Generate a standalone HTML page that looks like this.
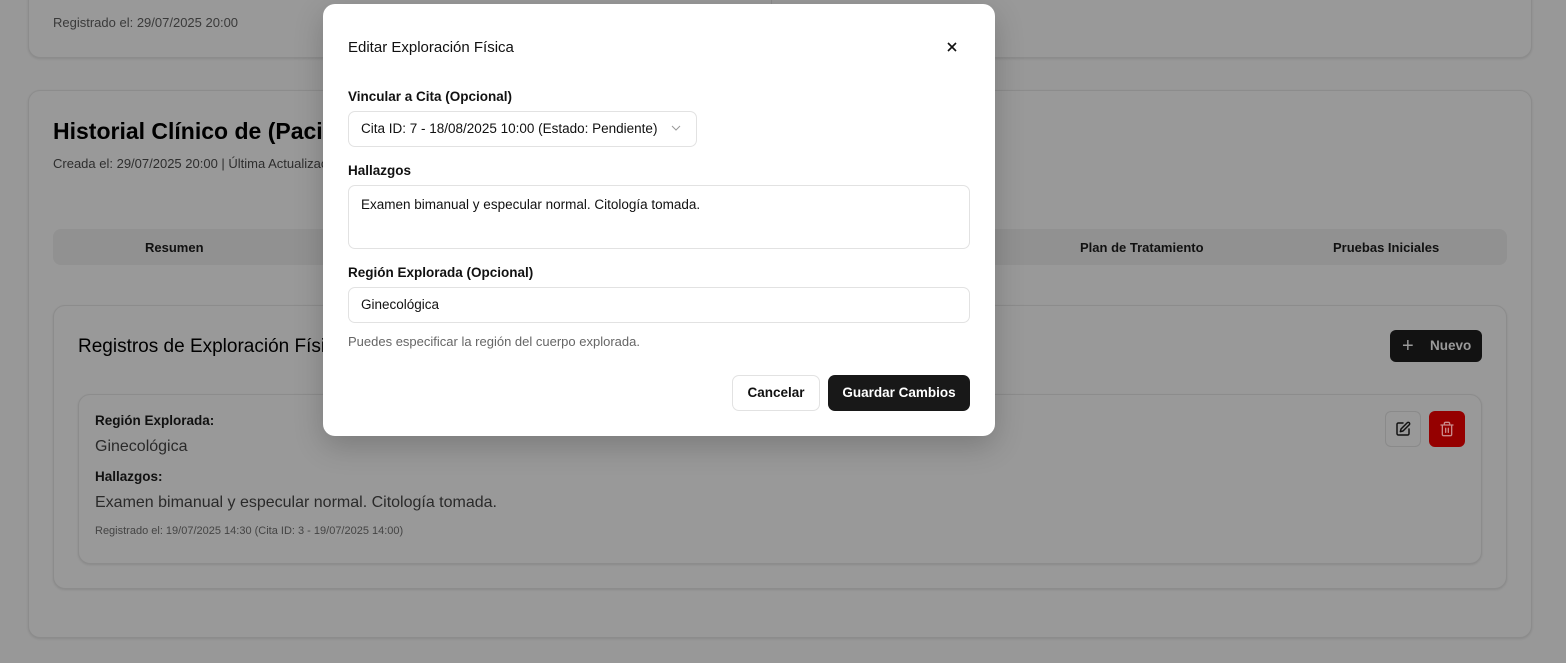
<!DOCTYPE html>
<html><head><meta charset="utf-8"><style>
*{box-sizing:border-box;margin:0;padding:0}
body{width:1566px;height:663px;overflow:hidden;background:#989898;font-family:"Liberation Sans",sans-serif;color:#111;position:relative}
.a{position:absolute;white-space:nowrap}
.card{position:absolute;border:1px solid #8c8c8c;border-radius:12px;background:#999;box-shadow:0 1px 2px rgba(0,0,0,.1)}
.modal{position:absolute;left:323px;top:4px;width:672px;height:432px;background:#fff;border-radius:12px;box-shadow:0 10px 30px rgba(0,0,0,.2)}
.lbl{font-size:13.5px;font-weight:bold;color:#111}
.inp{position:absolute;border:1px solid #e2e2e2;border-radius:7px;background:#fff;font-size:13.5px;color:#111;padding-left:12px}
</style></head><body>
<div class="card" style="left:28px;top:-20px;width:1504px;height:78px"></div>
<div class="a" style="left:53px;top:15px;font-size:13px;color:#3a3a3a">Registrado el: 29/07/2025 20:00</div>
<div class="a" style="left:771px;top:0;width:1px;height:40px;background:#8c8c8c"></div>

<div class="card" style="left:28px;top:90px;width:1504px;height:548px"></div>
<div class="a" style="left:53px;top:118px;font-size:23px;font-weight:bold;color:#000">Historial Clínico de (Paciente)</div>
<div class="a" style="left:53px;top:156px;font-size:13px;color:#2e2e2e">Creada el: 29/07/2025 20:00 | Última Actualización</div>
<div class="a" style="left:53px;top:229px;width:1454px;height:36px;background:#919191;border-radius:8px"></div>
<div class="a" style="left:145px;top:240px;font-size:13px;font-weight:bold">Resumen</div>
<div class="a" style="left:1080px;top:240px;font-size:13px;font-weight:bold">Plan de Tratamiento</div>
<div class="a" style="left:1333px;top:240px;font-size:13px;font-weight:bold">Pruebas Iniciales</div>

<div class="card" style="left:53px;top:305px;width:1454px;height:284px"></div>
<div class="a" style="left:78px;top:336px;font-size:19px;color:#000">Registros de Exploración Física</div>
<div class="a" style="left:1390px;top:330px;width:92px;height:32px;background:#121212;border-radius:6px;color:#9a9a9a;font-size:13.5px;font-weight:bold;padding:8px 0 0 40px">Nuevo</div>
<div class="a" style="left:1402px;top:336px;color:#9a9a9a;font-size:20px;line-height:20px">+</div>

<div class="card" style="left:78px;top:394px;width:1404px;height:170px"></div>
<div class="a" style="left:95px;top:413px;font-size:13.5px;font-weight:bold">Región Explorada:</div>
<div class="a" style="left:95px;top:438px;font-size:16px;color:#2a2a2a">Ginecológica</div>
<div class="a" style="left:95px;top:469px;font-size:13.5px;font-weight:bold">Hallazgos:</div>
<div class="a" style="left:95px;top:494px;font-size:16px;color:#2a2a2a">Examen bimanual y especular normal. Citología tomada.</div>
<div class="a" style="left:95px;top:525px;font-size:11px;color:#444">Registrado el: 19/07/2025 14:30 (Cita ID: 3 - 19/07/2025 14:00)</div>
<div class="a" style="left:1385px;top:411px;width:36px;height:36px;border:1px solid #8a8a8a;border-radius:6px"></div>
<svg class="a" style="left:1395px;top:421px" width="16" height="16" viewBox="0 0 24 24" fill="none" stroke="#111" stroke-width="2.2" stroke-linecap="round" stroke-linejoin="round"><path d="M12 3H5a2 2 0 0 0-2 2v14a2 2 0 0 0 2 2h14a2 2 0 0 0 2-2v-7"/><path d="M18.4 2.6a2.1 2.1 0 0 1 3 3L12 15l-4 1 1-4z"/></svg>
<div class="a" style="left:1429px;top:411px;width:36px;height:36px;background:#950000;border-radius:6px"></div>
<svg class="a" style="left:1439px;top:421px" width="16" height="16" viewBox="0 0 24 24" fill="none" stroke="#c98a8a" stroke-width="2" stroke-linecap="round"><path d="M3 6h18M19 6v14a2 2 0 0 1-2 2H7a2 2 0 0 1-2-2V6M8 6V4a2 2 0 0 1 2-2h4a2 2 0 0 1 2 2v2M10 11v6M14 11v6"/></svg>

<div class="modal">
<div class="a" style="left:25px;top:35px;font-size:15px;font-weight:normal;color:#111">Editar Exploración Física</div>
<svg class="a" style="left:623px;top:37px" width="12" height="12" viewBox="0 0 12 12" stroke="#111" stroke-width="1.6"><path d="M2 2L10 10M10 2L2 10"/></svg>
<div class="a lbl" style="left:25px;top:85px">Vincular a Cita (Opcional)</div>
<div class="inp" style="left:25px;top:107px;width:349px;height:36px;line-height:34px">Cita ID: 7 - 18/08/2025 10:00 (Estado: Pendiente)</div>
<svg class="a" style="left:348px;top:121px" width="10" height="6" viewBox="0 0 10 6" fill="none" stroke="#999" stroke-width="1"><path d="M1 1l4 4 4-4"/></svg>
<div class="a lbl" style="left:25px;top:159px">Hallazgos</div>
<div class="inp" style="left:25px;top:181px;width:622px;height:64px;padding-top:11px">Examen bimanual y especular normal. Citología tomada.</div>
<div class="a lbl" style="left:25px;top:261px">Región Explorada (Opcional)</div>
<div class="inp" style="left:25px;top:283px;width:622px;height:36px;line-height:34px">Ginecológica</div>
<div class="a" style="left:25px;top:330px;font-size:13px;color:#666">Puedes especificar la región del cuerpo explorada.</div>
<div class="a" style="left:409px;top:371px;width:88px;height:36px;border:1px solid #e2e2e2;border-radius:7px;font-size:13.5px;font-weight:bold;text-align:center;line-height:34px">Cancelar</div>
<div class="a" style="left:505px;top:371px;width:142px;height:36px;background:#181818;border-radius:7px;font-size:13.5px;font-weight:bold;color:#fff;text-align:center;line-height:36px">Guardar Cambios</div>
</div>
</body></html>
